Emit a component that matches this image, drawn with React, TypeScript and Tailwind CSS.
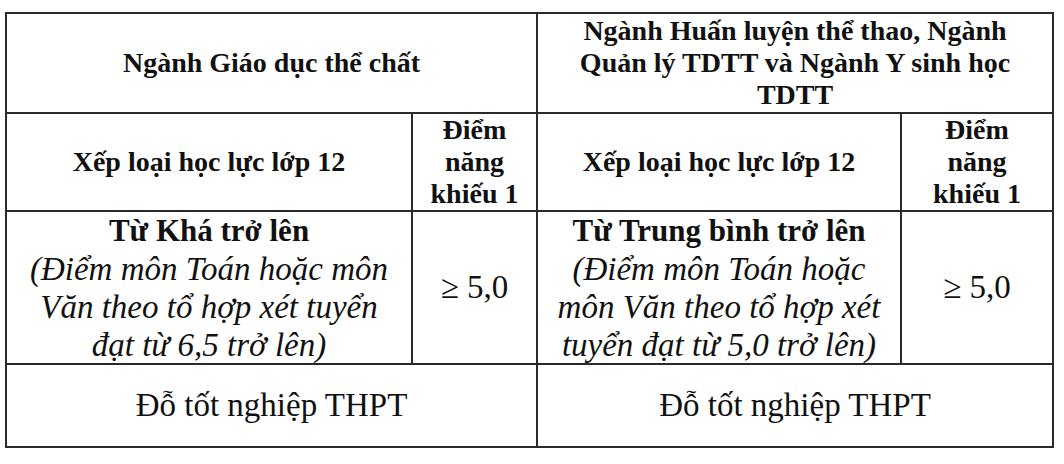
import React from "react";

const cell = "bg-white flex flex-col items-center justify-center text-center font-['Liberation_Serif']";

export default function App() {
  return (
    <div className="w-[1064px] h-[464px] bg-white pl-[5px] pt-[12px] text-[#111] font-['Liberation_Serif']">
      <div className="grid grid-cols-[404px_123px_362px_150px] grid-rows-[98px_96px_151px_81px] gap-[2px] p-[2px] bg-[#2a2a2a] w-[1049px]">
        {/* tên ngành */}
        <div className={`${cell} col-span-2 font-bold text-[28px] leading-[32px]`}>Ngành Giáo dục thể chất</div>
        <div className={`${cell} col-span-2 font-bold text-[28px] leading-[32px]`}>
          <span>Ngành Huấn luyện thể thao, Ngành</span>
          <span>Quản lý TDTT và Ngành Y sinh học</span>
          <span>TDTT</span>
        </div>

        {/* tiêu đề cột */}
        <div className={`${cell} font-bold text-[28px] leading-[32px]`}>Xếp loại học lực lớp 12</div>
        <div className={`${cell} font-bold text-[28px] leading-[32px]`}>
          <span>Điểm</span>
          <span>năng</span>
          <span>khiếu 1</span>
        </div>
        <div className={`${cell} font-bold text-[28px] leading-[32px]`}>Xếp loại học lực lớp 12</div>
        <div className={`${cell} font-bold text-[28px] leading-[32px]`}>
          <span>Điểm</span>
          <span>năng</span>
          <span>khiếu 1</span>
        </div>

        {/* điều kiện */}
        <div className={`${cell} leading-[38px]`}>
          <span className="font-bold text-[31px]">Từ Khá trở lên</span>
          <span className="italic text-[33px]">(Điểm môn Toán hoặc môn</span>
          <span className="italic text-[33px]">Văn theo tổ hợp xét tuyển</span>
          <span className="italic text-[33px]">đạt từ 6,5 trở lên)</span>
        </div>
        <div className={`${cell} text-[33px]`}>≥ 5,0</div>
        <div className={`${cell} leading-[38px]`}>
          <span className="font-bold text-[31px]">Từ Trung bình trở lên</span>
          <span className="italic text-[33px]">(Điểm môn Toán hoặc</span>
          <span className="italic text-[33px]">môn Văn theo tổ hợp xét</span>
          <span className="italic text-[33px]">tuyển đạt từ 5,0 trở lên)</span>
        </div>
        <div className={`${cell} text-[33px]`}>≥ 5,0</div>

        <div className={`${cell} col-span-2 text-[33px]`}>Đỗ tốt nghiệp THPT</div>
        <div className={`${cell} col-span-2 text-[33px]`}>Đỗ tốt nghiệp THPT</div>
      </div>
    </div>
  );
}
